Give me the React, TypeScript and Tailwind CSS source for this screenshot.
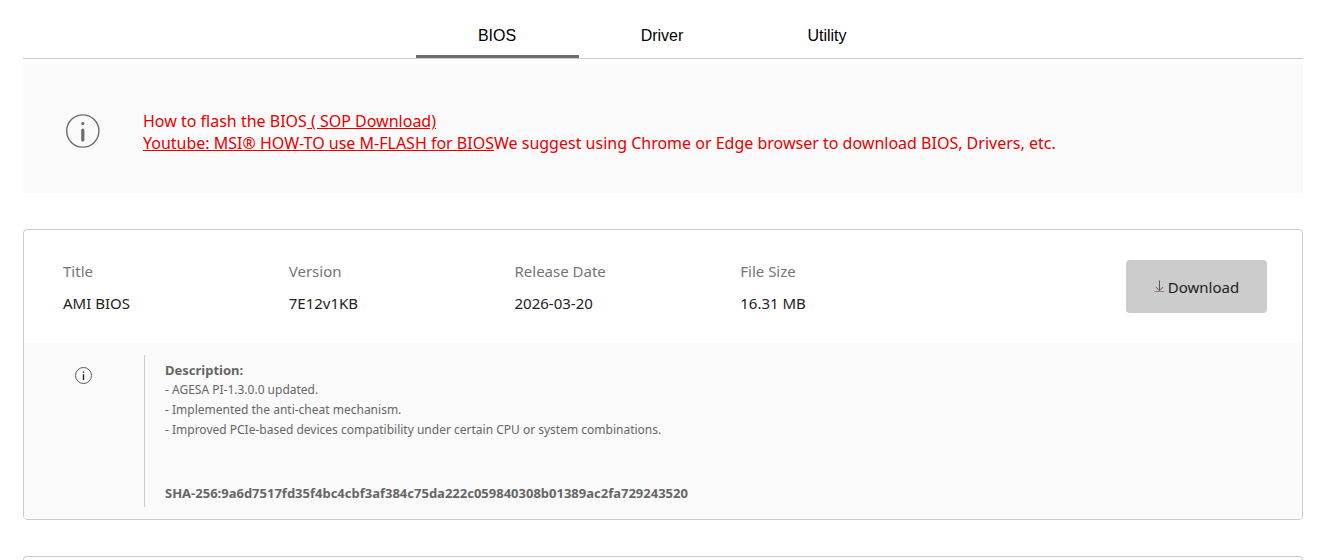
import React, { useState } from "react";

const tabs = ["BIOS", "Driver", "Utility"];

const fields = [
  { label: "Title", value: "AMI BIOS" },
  { label: "Version", value: "7E12v1KB" },
  { label: "Release Date", value: "2026-03-20" },
  { label: "File Size", value: "16.31 MB" },
];

const changes = [
  "- AGESA PI-1.3.0.0 updated.",
  "- Implemented the anti-cheat mechanism.",
  "- Improved PCIe-based devices compatibility under certain CPU or system combinations.",
];

function NoticeIcon() {
  return (
    <svg viewBox="0 0 34 34" className="size-[34px] shrink-0 text-[#6b6b6b]" fill="none" aria-hidden="true">
      <circle cx="16.8" cy="17" r="16.1" stroke="currentColor" strokeWidth="1.4" />
      <circle cx="16.8" cy="9.6" r="1.6" fill="currentColor" />
      <path d="M16.8 16V26" stroke="currentColor" strokeWidth="3.2" strokeLinecap="round" />
    </svg>
  );
}

function InfoIcon() {
  return (
    <svg viewBox="0 0 17 17" className="size-[17px]" fill="none" aria-hidden="true">
      <circle cx="8.5" cy="8.5" r="8" stroke="#4a4a4a" strokeWidth="0.9" />
      <path d="M8.5 4.6V5.8M8.5 7.2V13" stroke="#222222" strokeWidth="1.4" />
    </svg>
  );
}

function DownloadIcon() {
  return (
    <svg viewBox="0 0 11 13" className="h-[13px] w-[11px]" fill="none" aria-hidden="true">
      <path d="M5.5 0.5V10.5M1.8 7L5.5 10.7L9.2 7" stroke="#6b4a72" strokeWidth="1" />
      <path d="M0.5 11.5H10.5" stroke="#8a8490" strokeWidth="1" />
    </svg>
  );
}

export default function App() {
  const [active, setActive] = useState("BIOS");

  return (
    <main className="bg-white pl-[23px] pr-[33px] pt-3 font-['Noto_Sans','Open_Sans',sans-serif] text-black">
      <nav className="flex justify-center gap-0.5 border-b border-[#cccccc] pr-0.5 font-['Liberation_Sans',Arial,sans-serif]">
        {tabs.map((tab) => (
          <button
            key={tab}
            type="button"
            onClick={() => setActive(tab)}
            className={`h-[46px] w-[163px] cursor-pointer border-b-[3px] pt-1 text-base ${
              active === tab ? "border-[#6b6b6b]" : "border-transparent"
            }`}
          >
            {tab}
          </button>
        ))}
      </nav>

      <section className="mt-[5px] flex items-start gap-[43px] bg-[#fafafa] pb-[39px] pl-[43px] pt-[46px] text-base leading-[22px] text-[#e60000]">
        <div className="pt-1">
          <NoticeIcon />
        </div>
        <p>
          How to flash the BIOS
          <a href="#sop" className="underline"> ( SOP Download)</a>
          <br />
          <a href="#m-flash" className="underline">Youtube: MSI® HOW-TO use M-FLASH for BIOS</a>
          We suggest using Chrome or Edge browser to download BIOS, Drivers, etc.
        </p>
      </section>

      <article className="mt-9 overflow-hidden rounded border border-[#cccccc]">
        <div className="flex items-start justify-between pb-[29px] pl-[39px] pr-[35px] pt-[30px]">
          <dl className="grid w-3/4 grid-cols-4 text-[15px] leading-[22px]">
            {fields.map((f) => (
              <div key={f.label}>
                <dt className="text-[#757575]">{f.label}</dt>
                <dd className="mt-2.5 text-[#222222]">{f.value}</dd>
              </div>
            ))}
          </dl>
          <button
            type="button"
            className="flex h-[53px] w-[141px] cursor-pointer items-center justify-center gap-[3px] rounded bg-[#cccccc] text-[15px] text-[#222222]"
          >
            <DownloadIcon />
            <span className="pt-0.5">Download</span>
          </button>
        </div>

        <div className="flex bg-[#fafafa] py-3">
          <div className="flex w-[120px] shrink-0 justify-center pr-0.5 pt-3">
            <InfoIcon />
          </div>
          <div className="flex-1 border-l border-[#cccccc] pb-1 pl-5 pt-[5px] text-xs leading-5 text-[#666666]">
            <p className="text-[13px] leading-5 font-bold">Description:</p>
            {changes.map((line) => (
              <p key={line}>{line}</p>
            ))}
            <p className="mt-[43px] text-[13px] leading-5 font-bold">
              SHA-256:9a6d7517fd35f4bc4cbf3af384c75da222c059840308b01389ac2fa729243520
            </p>
          </div>
        </div>
      </article>

      <article className="mt-9 h-1 rounded-t border border-b-0 border-[#cccccc]" />
    </main>
  );
}
